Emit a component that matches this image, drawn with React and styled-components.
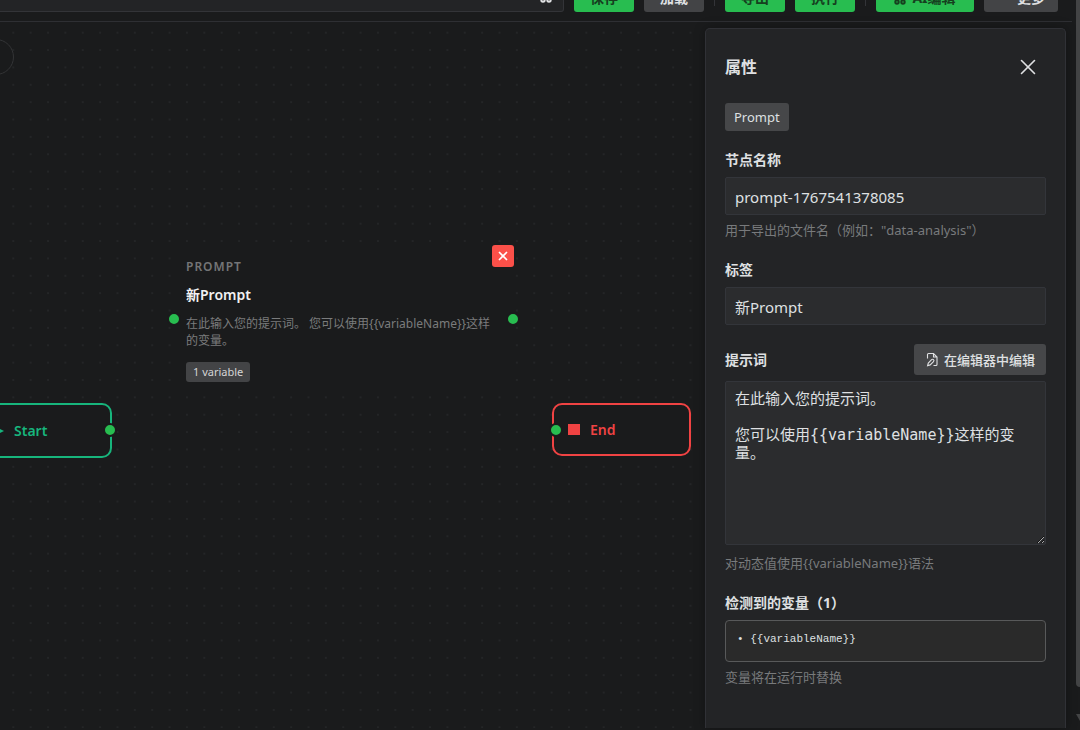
import React, { useState } from 'react';
import styled, { createGlobalStyle } from 'styled-components';
import { X, Ellipsis } from 'lucide-react';

const Global = createGlobalStyle`
  * { box-sizing: border-box; }
  html, body, #root { height: 100%; }
  body {
    margin: 0;
    overflow: hidden;
    background: #1a1b1c;
    color: #dfe0e2;
    font: 14px/20px "Noto Sans", "Noto Sans CJK SC", sans-serif;
  }
  button, input, textarea { font: inherit; color: inherit; margin: 0; }
`;

const Shell = styled.div`
  display: flex;
  height: 100vh;
  overflow: hidden;
`;

const Page = styled.div`
  flex: 1;
  min-width: 0;
  display: flex;
  flex-direction: column;
  margin-right: 4px;
`;

const Toolbar = styled.header`
  display: flex;
  align-items: flex-end;
  gap: 10px;
  height: 22px;
  flex: none;
  padding: 0 14px 9px 0;
  border-bottom: 1px solid #2e2f33;
`;

const NameField = styled.div`
  flex: 1;
  min-width: 0;
  height: 34px;
  display: flex;
  align-items: center;
  justify-content: flex-end;
  padding: 2px 11px 0 0;
  background: #232426;
  border: 1px solid #333438;
  border-left: 0;
  border-radius: 0 3px 3px 0;
`;

const ToolButton = styled.button`
  display: flex;
  align-items: center;
  justify-content: center;
  gap: 6px;
  flex: none;
  width: ${(p) => p.$width || 60}px;
  height: 32px;
  padding: 3px 0 0;
  border: 0;
  border-radius: 3px;
  font-weight: 700;
  background: ${(p) => (p.$primary ? '#28bd50' : '#434446')};
  color: ${(p) => (p.$primary ? '#16401f' : '#dfe0e2')};
`;

const Divider = styled.span`
  flex: none;
  width: 1px;
  height: 26px;
  margin-bottom: 6px;
  background: #333438;
`;

const Body = styled.div`
  flex: 1;
  min-height: 0;
  display: flex;
  padding: 0 6px 2px 0;
`;

const Canvas = styled.main`
  flex: 1;
  min-width: 0;
  position: relative;
  overflow: hidden;
`;

const Dots = styled.svg`
  display: block;
  width: 100%;
  height: 100%;
`;

const RoundButton = styled.button`
  position: absolute;
  left: -22px;
  top: 17px;
  width: 36px;
  height: 36px;
  border: 1px solid #333436;
  border-radius: 50%;
  background: #1a1b1c;
`;

const Terminal = styled.div`
  position: absolute;
  left: ${(p) => p.$x}px;
  top: ${(p) => p.$y}px;
  width: ${(p) => p.$w}px;
  height: ${(p) => p.$h}px;
  display: flex;
  align-items: center;
  gap: 10px;
  padding-left: 14px;
  border: 2px solid ${(p) => p.$color};
  border-radius: 10px;
  background: #1a1b1c;
  color: ${(p) => p.$color};
  font-weight: 600;
`;

const Port = styled.span`
  position: absolute;
  left: ${(p) => p.$x}px;
  top: ${(p) => p.$y}px;
  width: 14px;
  height: 14px;
  border: 2px solid #1a1b1c;
  border-radius: 50%;
  background: #28bd50;
`;

const PromptNode = styled.article`
  position: absolute;
  left: 174px;
  top: 224px;
  width: 340px;
  padding: 13px 12px;
  background: #1a1b1c;
`;

const NodeKind = styled.div`
  font-size: 12px;
  line-height: 16px;
  font-weight: 600;
  letter-spacing: 1px;
  color: #747576;
`;

const NodeTitle = styled.h3`
  margin: 10px 0 0;
  font-size: 14px;
  line-height: 20px;
  font-weight: 600;
  color: #f1f1f2;
`;

const NodeText = styled.p`
  margin: 10px 0 12px;
  font-size: 12px;
  line-height: 17px;
  color: #7a7b7c;
`;

const Chip = styled.span`
  display: inline-block;
  padding: 0 7px;
  border-radius: 3px;
  background: #434446;
  color: #d5d5d6;
  font-size: 11px;
  line-height: 20px;
`;

const DeleteButton = styled.button`
  position: absolute;
  right: 0;
  top: -1px;
  width: 22px;
  height: 22px;
  display: grid;
  place-items: center;
  padding: 0;
  border: 0;
  border-radius: 3px;
  background: #fb5049;
  color: #fff;
`;

const Panel = styled.aside`
  flex: none;
  width: 361px;
  margin-top: 6px;
  padding: 24px 19px 0;
  background: #232426;
  border: 1px solid #303136;
  border-bottom: 0;
  border-radius: 5px 5px 0 0;
  box-shadow: 0 0 12px rgba(0, 0, 0, 0.3);
  z-index: 1;
`;

const Row = styled.div`
  display: flex;
  align-items: center;
  justify-content: space-between;
  margin-top: ${(p) => p.$gap || 0}px;
`;

const PanelTitle = styled.h2`
  margin: 0;
  font-size: 16px;
  line-height: 28px;
`;

const CloseButton = styled.button`
  display: grid;
  place-items: center;
  width: 28px;
  height: 28px;
  margin-right: 4px;
  padding: 0;
  border: 0;
  background: none;
`;

const TypeTag = styled.div`
  width: max-content;
  margin: 22px 0 19px;
  padding: 0 9px;
  border-radius: 3px;
  background: #464749;
  font-size: 13px;
  line-height: 28px;
`;

const Label = styled.label`
  display: block;
  font-size: 14px;
  line-height: 20px;
  font-weight: 700;
`;

const TextInput = styled.input`
  display: block;
  width: 100%;
  height: 38px;
  margin-top: 7px;
  padding: 1px 9px 0;
  border: 1px solid #33353a;
  border-radius: 2px;
  outline: 0;
  background: #2b2c2e;
  font-size: 15px;
`;

const Hint = styled.p`
  margin: 5px 0 20px;
  font-size: 13px;
  line-height: 20px;
  color: #787a7c;
`;

const EditButton = styled.button`
  display: flex;
  align-items: center;
  gap: 5px;
  height: 31px;
  padding: 0 11px;
  border: 0;
  border-radius: 3px;
  background: #464749;
  font-size: 13px;
  font-weight: 500;
`;

const Editor = styled.textarea`
  display: block;
  width: 100%;
  height: 164px;
  margin: 6px 0 8px;
  padding: 8px 9px;
  border: 1px solid #33353a;
  border-radius: 2px;
  outline: 0;
  resize: vertical;
  background: #2b2c2e;
  font: 15px/18px "DejaVu Sans Mono", "Noto Sans CJK SC", monospace;
`;

const VariableList = styled.ul`
  height: 42px;
  margin: 7px 0 0;
  padding: 8px 11px;
  list-style: none;
  border: 1px solid #58595a;
  border-radius: 4px;
  background: #2a2a2a;
  font: 11px/20px "Liberation Mono", monospace;
`;

const ScrollTrack = styled.div`
  flex: none;
  width: 4px;
  display: flex;
  flex-direction: column;
  justify-content: space-between;
  padding-bottom: 8px;
  overflow: hidden;
`;

const ScrollThumb = styled.div`
  height: calc(100% - 35px);
  background: #434445;
  border-radius: 0 0 0 4px;
`;

const Sparkle = () => (
  <svg width="12" height="14" viewBox="0 0 12 14" fill="none" stroke="currentColor" strokeWidth="2" aria-hidden="true">
    <path d="M2 1v5M10 1v5M4 5h4" />
    <circle cx="3" cy="11" r="1.7" />
    <circle cx="9" cy="11" r="1.7" />
  </svg>
);

const FilePen = () => (
  <svg width="14" height="15" viewBox="0 0 14 15" fill="none" stroke="currentColor" strokeWidth="1.1" aria-hidden="true">
    <path d="M2.5 6.5v-4a1 1 0 0 1 1-1h5L12 5v7.5a1 1 0 0 1-1 1H8.5M8.5 1.5V5H12" />
    <path d="M2.6 13.6l.7-2.6 3.3-3.3a1.3 1.3 0 0 1 1.9 1.9l-3.3 3.3z" />
  </svg>
);

const DEFAULT_PROMPT = '在此输入您的提示词。\n\n您可以使用{{variableName}}这样的变量。';

export default function App() {
  const [name, setName] = useState('prompt-1767541378085');
  const [label, setLabel] = useState('新Prompt');
  const [prompt, setPrompt] = useState(DEFAULT_PROMPT);
  return (
    <>
      <Global />
      <Shell>
        <Page>
          <Toolbar>
            <NameField><Sparkle /></NameField>
            <ToolButton $primary>保存</ToolButton>
            <ToolButton>加载</ToolButton>
            <Divider />
            <ToolButton $primary>导出</ToolButton>
            <ToolButton $primary>执行</ToolButton>
            <Divider />
            <ToolButton $primary $width={98}><Sparkle />AI编辑</ToolButton>
            <ToolButton $width={74}><Ellipsis size={14} />更多</ToolButton>
          </Toolbar>
          <Body>
            <Canvas>
              <Dots aria-hidden="true">
                <defs>
                  <pattern id="dots" x="4.6" y="2" width="17.365" height="17.365" patternUnits="userSpaceOnUse">
                    <circle cx="8.7" cy="8.7" r="0.8" fill="#303133" />
                  </pattern>
                </defs>
                <rect width="100%" height="100%" fill="url(#dots)" />
              </Dots>
              <RoundButton aria-label="展开" />
              <Terminal $x={-28} $y={381} $w={140} $h={55} $color="#17b57c">
                <svg width="16" height="12" viewBox="0 0 16 12" aria-hidden="true"><path d="M6 1l10 5-10 5z" fill="currentColor" /></svg>
                Start
                <Port $x={129} $y={18} />
              </Terminal>
              <PromptNode>
                <NodeKind>PROMPT</NodeKind>
                <NodeTitle>新Prompt</NodeTitle>
                <NodeText>{'在此输入您的提示词。 您可以使用{{variableName}}这样的变量。'}</NodeText>
                <Chip>1 variable</Chip>
                <DeleteButton aria-label="删除"><X size={14} strokeWidth={3} /></DeleteButton>
                <Port $x={-7} $y={66} />
                <Port $x={332} $y={66} />
              </PromptNode>
              <Terminal $x={552} $y={381} $w={139} $h={53} $color="#f04343">
                <svg width="12" height="12" aria-hidden="true"><rect width="12" height="11" fill="currentColor" /></svg>
                End
                <Port $x={-5} $y={18} />
              </Terminal>
            </Canvas>
            <Panel>
              <Row>
                <PanelTitle>属性</PanelTitle>
                <CloseButton aria-label="关闭"><X size={26} strokeWidth={1.5} /></CloseButton>
              </Row>
              <TypeTag>Prompt</TypeTag>
              <Label htmlFor="name">节点名称</Label>
              <TextInput id="name" value={name} onChange={(e) => setName(e.target.value)} />
              <Hint>用于导出的文件名（例如："data-analysis"）</Hint>
              <Label htmlFor="label">标签</Label>
              <TextInput id="label" value={label} onChange={(e) => setLabel(e.target.value)} />
              <Row $gap={19}>
                <Label htmlFor="prompt">提示词</Label>
                <EditButton><FilePen />在编辑器中编辑</EditButton>
              </Row>
              <Editor id="prompt" spellCheck={false} value={prompt} onChange={(e) => setPrompt(e.target.value)} />
              <Hint>{'对动态值使用{{variableName}}语法'}</Hint>
              <Label as="div">检测到的变量（1）</Label>
              <VariableList><li>{'• {{variableName}}'}</li></VariableList>
              <Hint>变量将在运行时替换</Hint>
            </Panel>
          </Body>
        </Page>
        <ScrollTrack aria-hidden="true">
          <ScrollThumb />
          <svg width="8" height="8" viewBox="0 0 8 8"><path d="M0 0h8L4 7z" fill="#434445" /></svg>
        </ScrollTrack>
      </Shell>
    </>
  );
}
